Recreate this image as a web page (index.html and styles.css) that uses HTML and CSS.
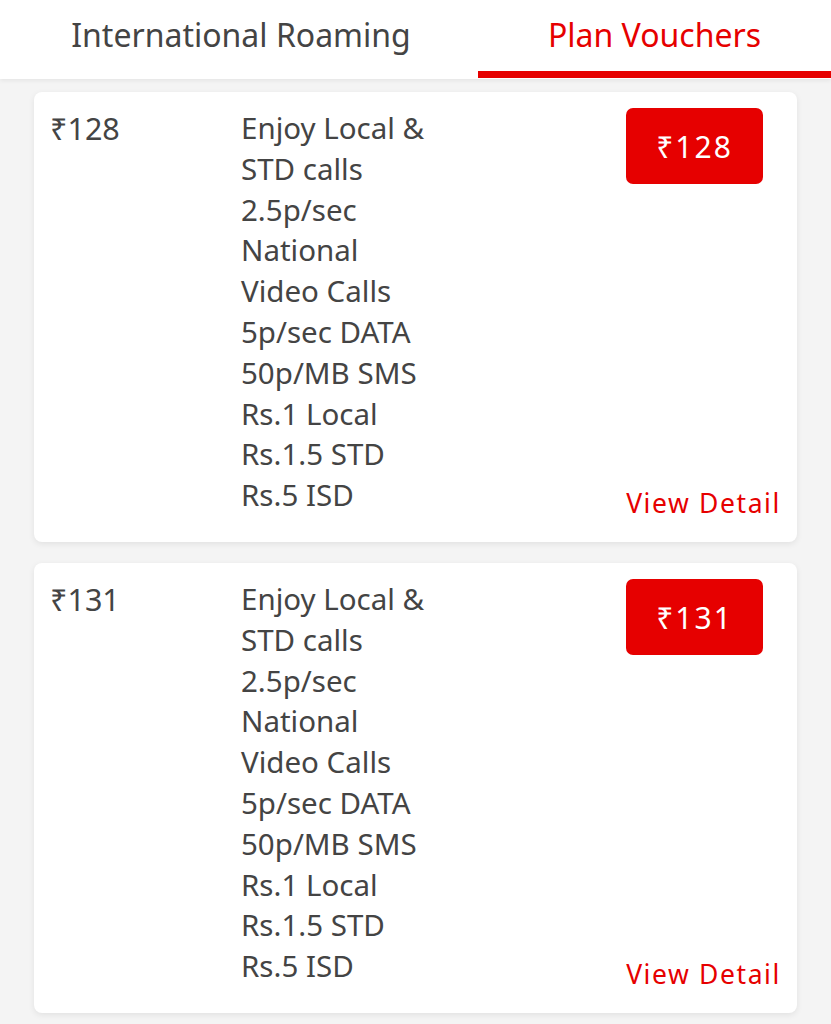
FILE: index.html
```html
<!DOCTYPE html>
<html>
<head>
<meta charset="utf-8">
<link rel="stylesheet" href="styles.css">
</head>
<body>
<div class="tabs">
  <div class="tab tab-first">International Roaming</div>
  <div class="tab tab-active">Plan Vouchers</div>
</div>
<div class="list">
  <div class="card">
    <div class="price">₹128</div>
    <div class="desc">Enjoy Local &amp; STD calls 2.5p/sec National Video Calls 5p/sec DATA 50p/MB SMS Rs.1 Local Rs.1.5 STD Rs.5 ISD</div>
    <div class="side">
      <div class="btn">₹128</div>
      <div class="detail">View Detail</div>
    </div>
  </div>
  <div class="card">
    <div class="price">₹131</div>
    <div class="desc">Enjoy Local &amp; STD calls 2.5p/sec National Video Calls 5p/sec DATA 50p/MB SMS Rs.1 Local Rs.1.5 STD Rs.5 ISD</div>
    <div class="side">
      <div class="btn">₹131</div>
      <div class="detail">View Detail</div>
    </div>
  </div>
</div>
</body>
</html>
```
FILE: styles.css
```css
* { box-sizing: border-box; }
html, body { margin: 0; padding: 0; }
body {
  background: #f4f4f4;
  font-family: "Noto Sans", "DejaVu Sans", sans-serif;
  color: #444;
  width: 831px;
  height: 1024px;
  overflow: hidden;
}
.tabs {
  display: flex;
  background: #fff;
  height: 79px;
  box-shadow: 0 2px 4px rgba(0,0,0,0.06);
  position: relative;
}
.tab {
  font-size: 32px;
  line-height: 70px;
  text-align: center;
  color: #444;
}
.tab-first { width: 482px; }
.tab-active {
  flex: 1;
  color: #e60000;
  border-bottom: 7px solid #e60000;
  height: 78px;
  margin-left: -4px;
}
.list {
  padding: 13px 34px 0 34px;
  display: flex;
  flex-direction: column;
  gap: 21px;
}
.card {
  background: #fff;
  border-radius: 8px;
  box-shadow: 0 2px 6px rgba(0,0,0,0.08);
  height: 450px;
  padding: 16px 18px 0 16px;
  display: grid;
  grid-template-columns: 191px 1fr 153px;
}
.price {
  font-size: 30.5px;
  line-height: 40.8px;
}
.desc {
  font-size: 29.5px;
  line-height: 40.8px;
  width: 194px;
}
.side {
  display: flex;
  flex-direction: column;
  justify-content: space-between;
  padding-bottom: 22px;
}
.btn {
  width: 137px;
  height: 76px;
  background: #e60000;
  color: #fff;
  border-radius: 7px;
  font-size: 30px;
  letter-spacing: 2px;
  display: flex;
  align-items: center;
  justify-content: center;
}
.detail {
  color: #e60000;
  font-size: 26.5px;
  letter-spacing: 1.6px;
  text-align: right;
  line-height: 34px;
  margin-right: -2px;
  white-space: nowrap;
}
```
